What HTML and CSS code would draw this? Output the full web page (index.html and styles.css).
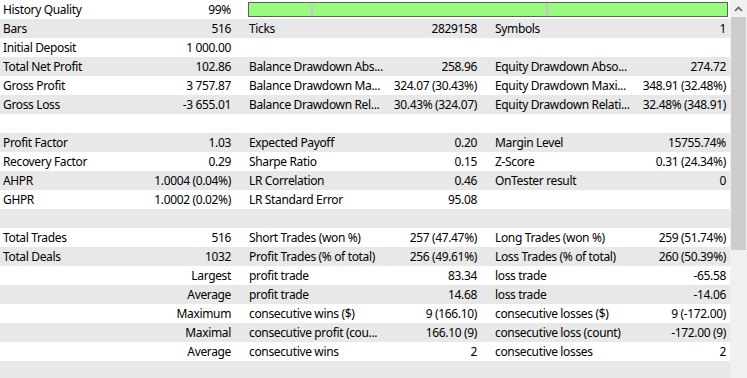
FILE: index.html
```html
<!DOCTYPE html>
<html>
<head>
<meta charset="utf-8">
<link rel="stylesheet" href="styles.css">
</head>
<body>
<div class="window">
  <div class="table">
    <div class="row">
      <div class="cell"><span class="lbl">History Quality</span><span class="val">99%</span></div>
      <div class="barcell">
        <div class="bar">
          <div class="seg seg1"></div>
          <div class="seg seg2"></div>
          <div class="seg seg3"></div>
        </div>
      </div>
    </div>
    <div class="row">
      <div class="cell"><span class="lbl">Bars</span><span class="val">516</span></div>
      <div class="cell"><span class="lbl">Ticks</span><span class="val">2829158</span></div>
      <div class="cell last"><span class="lbl">Symbols</span><span class="val">1</span></div>
    </div>
    <div class="row">
      <div class="cell"><span class="lbl">Initial Deposit</span><span class="val">1 000.00</span></div>
      <div class="cell"></div>
      <div class="cell last"></div>
    </div>
    <div class="row">
      <div class="cell"><span class="lbl">Total Net Profit</span><span class="val">102.86</span></div>
      <div class="cell"><span class="lbl">Balance Drawdown Abs...</span><span class="val">258.96</span></div>
      <div class="cell last"><span class="lbl">Equity Drawdown Abso...</span><span class="val">274.72</span></div>
    </div>
    <div class="row">
      <div class="cell"><span class="lbl">Gross Profit</span><span class="val">3 757.87</span></div>
      <div class="cell"><span class="lbl">Balance Drawdown Ma...</span><span class="val">324.07 (30.43%)</span></div>
      <div class="cell last"><span class="lbl">Equity Drawdown Maxi...</span><span class="val">348.91 (32.48%)</span></div>
    </div>
    <div class="row">
      <div class="cell"><span class="lbl">Gross Loss</span><span class="val">-3 655.01</span></div>
      <div class="cell"><span class="lbl">Balance Drawdown Rel...</span><span class="val">30.43% (324.07)</span></div>
      <div class="cell last"><span class="lbl">Equity Drawdown Relati...</span><span class="val">32.48% (348.91)</span></div>
    </div>
    <div class="row empty"></div>
    <div class="row">
      <div class="cell"><span class="lbl">Profit Factor</span><span class="val">1.03</span></div>
      <div class="cell"><span class="lbl">Expected Payoff</span><span class="val">0.20</span></div>
      <div class="cell last"><span class="lbl">Margin Level</span><span class="val">15755.74%</span></div>
    </div>
    <div class="row">
      <div class="cell"><span class="lbl">Recovery Factor</span><span class="val">0.29</span></div>
      <div class="cell"><span class="lbl">Sharpe Ratio</span><span class="val">0.15</span></div>
      <div class="cell last"><span class="lbl">Z-Score</span><span class="val">0.31 (24.34%)</span></div>
    </div>
    <div class="row">
      <div class="cell"><span class="lbl">AHPR</span><span class="val">1.0004 (0.04%)</span></div>
      <div class="cell"><span class="lbl">LR Correlation</span><span class="val">0.46</span></div>
      <div class="cell last"><span class="lbl">OnTester result</span><span class="val">0</span></div>
    </div>
    <div class="row">
      <div class="cell"><span class="lbl">GHPR</span><span class="val">1.0002 (0.02%)</span></div>
      <div class="cell"><span class="lbl">LR Standard Error</span><span class="val">95.08</span></div>
      <div class="cell last"></div>
    </div>
    <div class="row empty"></div>
    <div class="row">
      <div class="cell"><span class="lbl">Total Trades</span><span class="val">516</span></div>
      <div class="cell"><span class="lbl">Short Trades (won %)</span><span class="val">257 (47.47%)</span></div>
      <div class="cell last"><span class="lbl">Long Trades (won %)</span><span class="val">259 (51.74%)</span></div>
    </div>
    <div class="row">
      <div class="cell"><span class="lbl">Total Deals</span><span class="val">1032</span></div>
      <div class="cell"><span class="lbl">Profit Trades (% of total)</span><span class="val">256 (49.61%)</span></div>
      <div class="cell last"><span class="lbl">Loss Trades (% of total)</span><span class="val">260 (50.39%)</span></div>
    </div>
    <div class="row">
      <div class="cell"><span class="lbl"></span><span class="val">Largest</span></div>
      <div class="cell"><span class="lbl">profit trade</span><span class="val">83.34</span></div>
      <div class="cell last"><span class="lbl">loss trade</span><span class="val">-65.58</span></div>
    </div>
    <div class="row">
      <div class="cell"><span class="lbl"></span><span class="val">Average</span></div>
      <div class="cell"><span class="lbl">profit trade</span><span class="val">14.68</span></div>
      <div class="cell last"><span class="lbl">loss trade</span><span class="val">-14.06</span></div>
    </div>
    <div class="row">
      <div class="cell"><span class="lbl"></span><span class="val">Maximum</span></div>
      <div class="cell"><span class="lbl">consecutive wins ($)</span><span class="val">9 (166.10)</span></div>
      <div class="cell last"><span class="lbl">consecutive losses ($)</span><span class="val">9 (-172.00)</span></div>
    </div>
    <div class="row">
      <div class="cell"><span class="lbl"></span><span class="val">Maximal</span></div>
      <div class="cell"><span class="lbl">consecutive profit (cou...</span><span class="val">166.10 (9)</span></div>
      <div class="cell last"><span class="lbl">consecutive loss (count)</span><span class="val">-172.00 (9)</span></div>
    </div>
    <div class="row">
      <div class="cell"><span class="lbl"></span><span class="val">Average</span></div>
      <div class="cell"><span class="lbl">consecutive wins</span><span class="val">2</span></div>
      <div class="cell last"><span class="lbl">consecutive losses</span><span class="val">2</span></div>
    </div>
    <div class="row empty"></div>
  </div>
  <div class="scrollbar">
    <div class="sb-btn">
      <svg width="9" height="6" viewBox="0 0 9 6"><path d="M1 5 L4.5 1.5 L8 5" fill="none" stroke="#606060" stroke-width="1.6"/></svg>
    </div>
    <div class="sb-thumb"></div>
    <div class="sb-track"></div>
  </div>
</div>
</body>
</html>
```
FILE: styles.css
```css
html, body {
  margin: 0;
  padding: 0;
  background: #ffffff;
  overflow: hidden;
}
.window {
  display: flex;
  width: 747px;
  height: 378px;
  overflow: hidden;
  font-family: "Noto Sans", "Open Sans", sans-serif;
  font-size: 12px;
  letter-spacing: -0.35px;
  color: #000000;
}
.table {
  width: 730px;
  display: flex;
  flex-direction: column;
}
.row {
  display: grid;
  grid-template-columns: 246px 246px 238px;
  height: 19px;
  line-height: 19px;
  flex: none;
}
.row:nth-child(even) {
  background: #e8e8e8;
}
.cell {
  display: flex;
  justify-content: space-between;
  padding: 0 15px 0 3px;
  white-space: nowrap;
  overflow: hidden;
}
.cell.last {
  padding-right: 4px;
}
.val {
  margin-left: auto;
  text-align: right;
}
.barcell {
  grid-column: 2 / 4;
  padding: 2px;
}
.bar {
  display: flex;
  height: 15px;
  box-sizing: border-box;
  border: 1px solid #5e5e5e;
  background: #9afa80;
}
.seg {
  height: 100%;
}
.seg1 { width: 62px; }
.seg2 { width: 233px; border-left: 2px solid #c6c6c6; }
.seg3 { flex: 1; border-left: 2px solid #c6c6c6; }
.scrollbar {
  width: 17px;
  display: flex;
  flex-direction: column;
  background: #f0f0f0;
}
.sb-btn {
  height: 17px;
  display: flex;
  align-items: center;
  justify-content: center;
}
.sb-thumb {
  height: 233px;
  margin: 0 1px;
  background: #cdcdcd;
}
.sb-track {
  flex: 1;
}
```
